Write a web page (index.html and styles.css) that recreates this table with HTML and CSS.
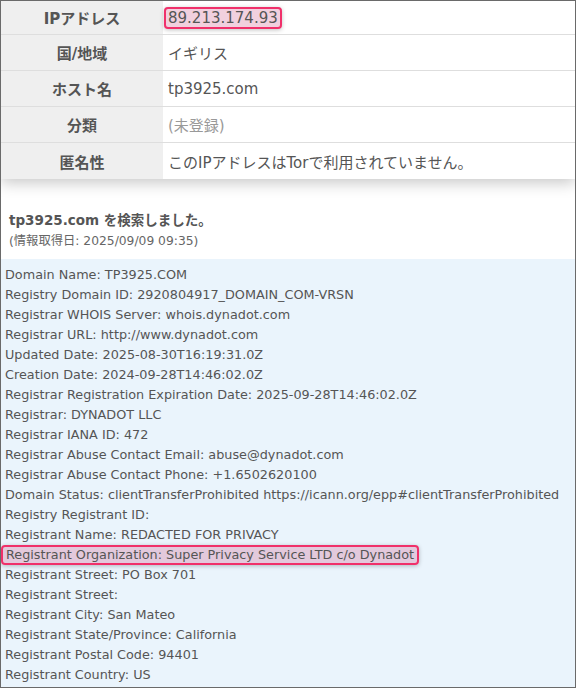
FILE: index.html
```html
<!DOCTYPE html>
<html lang="ja">
<head>
<meta charset="utf-8">
<link rel="stylesheet" href="styles.css">
</head>
<body>
<div class="frame">
  <table class="info">
    <tr><th>IPアドレス</th><td><span class="mark">89.213.174.93</span></td></tr>
    <tr><th>国/地域</th><td>イギリス</td></tr>
    <tr><th>ホスト名</th><td>tp3925.com</td></tr>
    <tr><th>分類</th><td class="muted">(未登録)</td></tr>
    <tr><th>匿名性</th><td>このIPアドレスはTorで利用されていません。</td></tr>
  </table>
  <div class="result">
    <p class="title">tp3925.com を検索しました。</p>
    <p class="date">(情報取得日: 2025/09/09 09:35)</p>
  </div>
  <div class="whois">
    <div class="line">Domain Name: TP3925.COM</div>
    <div class="line">Registry Domain ID: 2920804917_DOMAIN_COM-VRSN</div>
    <div class="line">Registrar WHOIS Server: whois.dynadot.com</div>
    <div class="line">Registrar URL: http://www.dynadot.com</div>
    <div class="line">Updated Date: 2025-08-30T16:19:31.0Z</div>
    <div class="line">Creation Date: 2024-09-28T14:46:02.0Z</div>
    <div class="line">Registrar Registration Expiration Date: 2025-09-28T14:46:02.0Z</div>
    <div class="line">Registrar: DYNADOT LLC</div>
    <div class="line">Registrar IANA ID: 472</div>
    <div class="line">Registrar Abuse Contact Email: abuse@dynadot.com</div>
    <div class="line">Registrar Abuse Contact Phone: +1.6502620100</div>
    <div class="line">Domain Status: clientTransferProhibited https://icann.org/epp#clientTransferProhibited</div>
    <div class="line">Registry Registrant ID:</div>
    <div class="line">Registrant Name: REDACTED FOR PRIVACY</div>
    <div class="line"><span class="mark mark-line">Registrant Organization: Super Privacy Service LTD c/o Dynadot</span></div>
    <div class="line">Registrant Street: PO Box 701</div>
    <div class="line">Registrant Street:</div>
    <div class="line">Registrant City: San Mateo</div>
    <div class="line">Registrant State/Province: California</div>
    <div class="line">Registrant Postal Code: 94401</div>
    <div class="line">Registrant Country: US</div>
  </div>
</div>
</body>
</html>
```
FILE: styles.css
```css
html, body {
  margin: 0;
  padding: 0;
  background: #fff;
}
body {
  font-family: "DejaVu Sans", "Noto Sans CJK JP", sans-serif;
  color: #555;
}
.frame {
  box-sizing: border-box;
  width: 576px;
  height: 688px;
  border: 1px solid #6a6a6a;
  overflow: hidden;
  background: #fff;
}
.info {
  width: 100%;
  border-collapse: collapse;
  box-shadow: 0 4px 14px rgba(0, 0, 0, 0.22);
  position: relative;
}
.info th,
.info td {
  height: 35px;
  padding: 0;
  border-bottom: 1px solid #dedede;
  font-size: 15px;
  vertical-align: middle;
}
.info tr:first-child th,
.info tr:first-child td {
  height: 33px;
}
.info tr:last-child th,
.info tr:last-child td {
  height: 36px;
  border-bottom: none;
}
.info th {
  width: 162px;
  background: #efefef;
  font-weight: bold;
  text-align: center;
  color: #555;
}
.info td {
  text-align: left;
  padding-left: 5px;
  background: #fff;
}
.info td.muted {
  color: #999;
}
.mark {
  background: rgba(214, 120, 160, 0.35);
  border: 2px solid #f0306a;
  border-radius: 4px;
  box-shadow: 0 1px 4px rgba(0, 0, 0, 0.25);
  padding: 0 2px;
  margin-left: -4px;
}
.result {
  padding: 31px 8px 8px;
}
.result p {
  margin: 0;
}
.title {
  font-size: 13.5px;
  font-weight: bold;
  line-height: 21px;
}
.date {
  font-size: 12.3px;
  line-height: 20px;
  color: #666;
}
.whois {
  background: #eaf4fc;
  padding: 6px 4px 5px;
  font-size: 12.8px;
  line-height: 20px;
}
.line {
  white-space: nowrap;
}
.mark-line {
  display: inline-block;
  vertical-align: top;
  margin-left: -4px;
  padding: 0 3px;
  line-height: 16px;
}
```
